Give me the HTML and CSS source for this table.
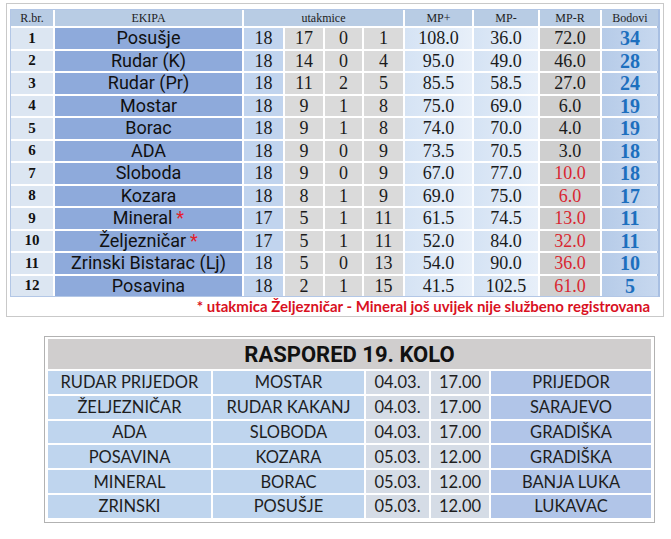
FILE: index.html
```html
<!DOCTYPE html>
<html lang="bs">
<head>
<meta charset="utf-8">
<title>Tabela</title>
<link rel="stylesheet" href="styles.css">
</head>
<body>
<div class="standings-frame">
  <div class="standings">
    <div class="hd">R.br.</div>
    <div class="hd">EKIPA</div>
    <div class="hd span4">utakmice</div>
    <div class="hd">MP+</div>
    <div class="hd">MP-</div>
    <div class="hd">MP-R</div>
    <div class="hd">Bodovi</div>

    <div class="rb">1</div><div class="team">Posušje</div><div class="p">18</div><div class="g">17</div><div class="g">0</div><div class="g">1</div><div class="mp">108.0</div><div class="mp">36.0</div><div class="mr">72.0</div><div class="pts">34</div>
    <div class="rb">2</div><div class="team">Rudar (K)</div><div class="p">18</div><div class="g">14</div><div class="g">0</div><div class="g">4</div><div class="mp">95.0</div><div class="mp">49.0</div><div class="mr">46.0</div><div class="pts">28</div>
    <div class="rb">3</div><div class="team">Rudar (Pr)</div><div class="p">18</div><div class="g">11</div><div class="g">2</div><div class="g">5</div><div class="mp">85.5</div><div class="mp">58.5</div><div class="mr">27.0</div><div class="pts">24</div>
    <div class="rb">4</div><div class="team">Mostar</div><div class="p">18</div><div class="g">9</div><div class="g">1</div><div class="g">8</div><div class="mp">75.0</div><div class="mp">69.0</div><div class="mr">6.0</div><div class="pts">19</div>
    <div class="rb">5</div><div class="team">Borac</div><div class="p">18</div><div class="g">9</div><div class="g">1</div><div class="g">8</div><div class="mp">74.0</div><div class="mp">70.0</div><div class="mr">4.0</div><div class="pts">19</div>
    <div class="rb">6</div><div class="team">ADA</div><div class="p">18</div><div class="g">9</div><div class="g">0</div><div class="g">9</div><div class="mp">73.5</div><div class="mp">70.5</div><div class="mr">3.0</div><div class="pts">18</div>
    <div class="rb">7</div><div class="team">Sloboda</div><div class="p">18</div><div class="g">9</div><div class="g">0</div><div class="g">9</div><div class="mp">67.0</div><div class="mp">77.0</div><div class="mr neg">10.0</div><div class="pts">18</div>
    <div class="rb">8</div><div class="team">Kozara</div><div class="p">18</div><div class="g">8</div><div class="g">1</div><div class="g">9</div><div class="mp">69.0</div><div class="mp">75.0</div><div class="mr neg">6.0</div><div class="pts">17</div>
    <div class="rb">9</div><div class="team">Mineral <span class="star">*</span></div><div class="p">17</div><div class="g">5</div><div class="g">1</div><div class="g">11</div><div class="mp">61.5</div><div class="mp">74.5</div><div class="mr neg">13.0</div><div class="pts">11</div>
    <div class="rb">10</div><div class="team">Željezničar <span class="star">*</span></div><div class="p">17</div><div class="g">5</div><div class="g">1</div><div class="g">11</div><div class="mp">52.0</div><div class="mp">84.0</div><div class="mr neg">32.0</div><div class="pts">11</div>
    <div class="rb">11</div><div class="team">Zrinski Bistarac (Lj)</div><div class="p">18</div><div class="g">5</div><div class="g">0</div><div class="g">13</div><div class="mp">54.0</div><div class="mp">90.0</div><div class="mr neg">36.0</div><div class="pts">10</div>
    <div class="rb">12</div><div class="team">Posavina</div><div class="p">18</div><div class="g">2</div><div class="g">1</div><div class="g">15</div><div class="mp">41.5</div><div class="mp">102.5</div><div class="mr neg">61.0</div><div class="pts">5</div>
  </div>
  <p class="note">* utakmica Željezničar - Mineral još uvijek nije službeno registrovana</p>
</div>

<div class="schedule-frame">
  <div class="schedule">
    <div class="title">RASPORED 19. KOLO</div>

    <div class="home">RUDAR PRIJEDOR</div><div class="home">MOSTAR</div><div class="dt">04.03.</div><div class="dt">17.00</div><div class="city">PRIJEDOR</div>
    <div class="home">ŽELJEZNIČAR</div><div class="home">RUDAR KAKANJ</div><div class="dt">04.03.</div><div class="dt">17.00</div><div class="city">SARAJEVO</div>
    <div class="home">ADA</div><div class="home">SLOBODA</div><div class="dt">04.03.</div><div class="dt">17.00</div><div class="city">GRADIŠKA</div>
    <div class="home">POSAVINA</div><div class="home">KOZARA</div><div class="dt">05.03.</div><div class="dt">12.00</div><div class="city">GRADIŠKA</div>
    <div class="home">MINERAL</div><div class="home">BORAC</div><div class="dt">05.03.</div><div class="dt">12.00</div><div class="city">BANJA LUKA</div>
    <div class="home">ZRINSKI</div><div class="home">POSUŠJE</div><div class="dt">05.03.</div><div class="dt">12.00</div><div class="city">LUKAVAC</div>
  </div>
</div>
</body>
</html>
```

FILE: styles.css
```css
* { box-sizing: border-box; }

html, body {
  margin: 0;
  padding: 0;
  background: #ffffff;
}

body {
  font-family: "Liberation Serif", serif;
  color: #1a1a1a;
}

.standings-frame {
  margin: 3px 0 0 6px;
  width: 658px;
  border: 1px solid #c9c9c9;
  padding: 5px 3px 0 3px;
}

.standings {
  display: grid;
  grid-template-columns: 42px 187px 39px 38px 37px 39px 67px 64px 60px 56px;
  grid-template-rows: 16px repeat(12, 20.5px);
  gap: 2px;
  background: #ffffff;
  border: 1px solid #b3c7e6;
  border-right: 3px solid #a8bfe2;
  width: 650px;
}

.standings > div {
  display: flex;
  align-items: center;
  justify-content: center;
  white-space: nowrap;
  line-height: 1;
}

.hd {
  background: #b8cce4;
  font-size: 12px;
  color: #222;
}

.span4 { grid-column: span 4; }

.rb {
  background: #dce6f2;
  font-weight: bold;
  font-size: 15px;
  color: #111;
}

.team {
  background: #8eaadb;
  font-family: Roboto, "Noto Sans", sans-serif;
  font-size: 18px;
  color: #111;
}

.star { color: #e3202b; margin-left: 4px; }

.p {
  background: #c1d4ee;
  font-size: 18px;
}

.g {
  background: #dadada;
  font-size: 18px;
}

.mp {
  background: linear-gradient(90deg, #d5e3f4, #e7eff9);
  font-size: 18px;
}

.mr {
  background: #cfcfcf;
  font-size: 18px;
}

.neg { color: #d9262f; }

.pts {
  background: linear-gradient(90deg, #b6cbe8, #c7d8ef);
  font-size: 20px;
  font-weight: bold;
  color: #1d6fbe;
}

.note {
  margin: 0;
  padding: 0 10px 0 0;
  height: 19px;
  line-height: 19px;
  text-align: right;
  font-family: Lato, "Noto Sans", sans-serif;
  font-weight: bold;
  font-size: 15px;
  color: #d9111f;
}

.schedule-frame {
  margin: 19px 0 0 44px;
  width: 611px;
  border: 1px solid #b2b2b2;
  padding: 2px 3px 4px 3px;
}

.schedule {
  display: grid;
  grid-template-columns: 163px 151px 63px 58px 1fr;
  grid-template-rows: 30px repeat(6, 22.8px);
  gap: 2px;
  background: #ffffff;
  font-family: Lato, "Noto Sans", sans-serif;
  font-size: 16.5px;
  color: #1e1e1e;
}

.schedule > div {
  display: flex;
  align-items: center;
  justify-content: center;
  white-space: nowrap;
}

.title {
  grid-column: 1 / -1;
  background: #d0cece;
  font-family: Roboto, "Noto Sans", sans-serif;
  font-weight: bold;
  font-size: 22px;
  color: #111;
}

.home { background: #bfd5ee; }
.dt { background: #d5dce6; }
.city { background: #b1c5e8; }
```
